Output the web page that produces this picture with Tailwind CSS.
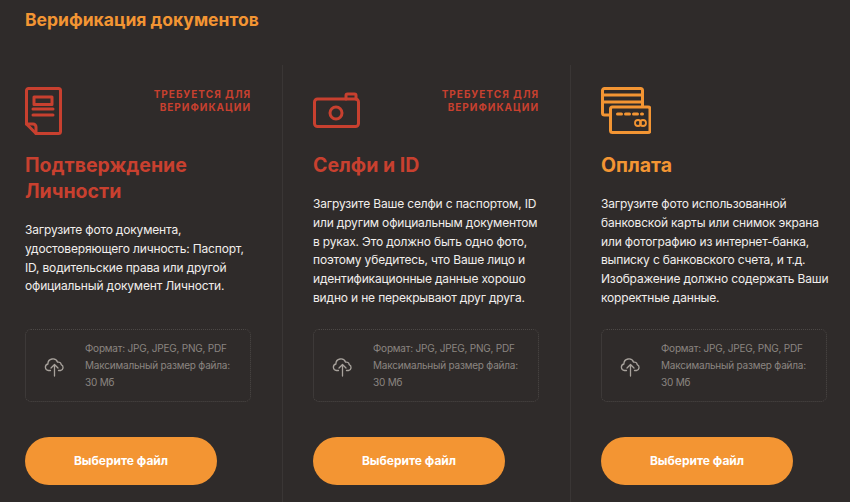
<!DOCTYPE html>
<html lang="ru">
<head>
    <meta charset="UTF-8">
    <meta name="viewport" content="width=device-width, initial-scale=1.0">
    <title>Верификация документов</title>
    <script src="https://cdn.jsdelivr.net/npm/@tailwindcss/browser@4"></script>
</head>
<body class="bg-[#2f2b2a] font-['Inter',sans-serif] h-[502px] w-[850px] overflow-hidden">
    <header class="pl-[25px] pt-[9px] h-[65px]">
        <h1 class="text-[17.5px] leading-[22px] font-bold text-[#f39533]">Верификация документов</h1>
    </header>

    <div class="grid grid-cols-[283px_288px_279px] h-[437px]">
        <!-- Personal ID -->
        <section class="flex flex-col pl-[25px] pr-[31px] border-r border-[#3a3635]">
            <div class="flex justify-between pt-[22px] h-[87px]">
                <svg class="w-[37px] h-[48px]" viewBox="0 0 37 48" fill="none" stroke="#c8402f" stroke-width="3" stroke-linejoin="round" stroke-linecap="round">
                    <path d="M1.500 37V3.500a2 2 0 0 1 2-2h30a2 2 0 0 1 2 2v41a2 2 0 0 1-2 2H11z"/>
                    <path d="M1.500 37h6.500a3 3 0 0 1 3 3v6.500"/>
                    <rect x="9" y="10" width="18" height="7.500"/>
                    <path d="M8 22h20M8 28h20"/>
                </svg>
                <p class="pt-[1px] text-right text-[10px] leading-[13px] font-bold tracking-[1px] text-[#c8402f]">ТРЕБУЕТСЯ ДЛЯ<br>ВЕРИФИКАЦИИ</p>
            </div>
            <h2 class="text-[19.500px] leading-[26px] font-bold text-[#c8402f]">Подтверждение<br>Личности</h2>
            <p class="mt-[17px] whitespace-nowrap text-[12px] leading-[18.800px] tracking-[-0.17px] text-[#f1eeec]">Загрузите фото документа,<br>удостоверяющего личность: Паспорт,<br>ID, водительские права или другой<br>официальный документ Личности.</p>
            <div class="mt-auto flex items-center h-[73px] border border-dotted border-[#4d4947] rounded-md">
                <svg class="w-[59px] h-[22px] shrink-0" viewBox="0 0 59 22" fill="none" stroke="#a8a29c" stroke-width="1.300" stroke-linecap="round" stroke-linejoin="round">
                    <path d="M24.500 15.500h-2a3.300 3.300 0 0 1-.6-6.500 5 5 0 0 1 9.700-1.800 2.800 2.800 0 0 1 3.600 2.400 3.100 3.100 0 0 1-.7 5.900h-2"/>
                    <path d="M28.500 21V9.500M25 13l3.500-3.500L32 13"/>
                </svg>
                <p class="text-[10px] leading-[17px] tracking-[-0.2px] text-[#8b8581]">Формат: JPG, JPEG, PNG, PDF<br>Максимальный размер файла:<br>30 Мб</p>
            </div>
            <button class="mt-[35px] mb-[17px] w-[192px] h-[48px] rounded-full bg-[#f39533] text-white text-[12px] font-bold">Выберите файл</button>
        </section>

        <!-- Selfie -->
        <section class="flex flex-col pl-[30px] pr-[31px] border-r border-[#3a3635]">
            <div class="flex justify-between pt-[22px] h-[87px]">
                <svg class="w-[48px] h-[48px]" viewBox="0 0 48 48" fill="none" stroke="#c8402f" stroke-width="3" stroke-linejoin="round" stroke-linecap="round">
                    <rect x="1.500" y="12" width="44" height="27.500" rx="3"/>
                    <path d="M33 12v-3.500a1.500 1.500 0 0 1 1.500-1.500h7a1.500 1.500 0 0 1 1.500 1.500v3.500"/>
                    <circle cx="23" cy="26" r="6"/>
                </svg>
                <p class="pt-[1px] text-right text-[10px] leading-[13px] font-bold tracking-[1px] text-[#c8402f]">ТРЕБУЕТСЯ ДЛЯ<br>ВЕРИФИКАЦИИ</p>
            </div>
            <h2 class="text-[19.500px] leading-[26px] font-bold text-[#c8402f]">Селфи и ID</h2>
            <p class="mt-[17px] whitespace-nowrap text-[12px] leading-[18.800px] tracking-[-0.17px] text-[#f1eeec]">Загрузите Ваше селфи с паспортом, ID<br>или другим официальным документом<br>в руках. Это должно быть одно фото,<br>поэтому убедитесь, что Ваше лицо и<br>идентификационные данные хорошо<br>видно и не перекрывают друг друга.</p>
            <div class="mt-auto flex items-center h-[73px] border border-dotted border-[#4d4947] rounded-md">
                <svg class="w-[59px] h-[22px] shrink-0" viewBox="0 0 59 22" fill="none" stroke="#a8a29c" stroke-width="1.300" stroke-linecap="round" stroke-linejoin="round">
                    <path d="M24.500 15.500h-2a3.300 3.300 0 0 1-.6-6.500 5 5 0 0 1 9.700-1.800 2.800 2.800 0 0 1 3.600 2.400 3.100 3.100 0 0 1-.7 5.900h-2"/>
                    <path d="M28.500 21V9.500M25 13l3.500-3.500L32 13"/>
                </svg>
                <p class="text-[10px] leading-[17px] tracking-[-0.2px] text-[#8b8581]">Формат: JPG, JPEG, PNG, PDF<br>Максимальный размер файла:<br>30 Мб</p>
            </div>
            <button class="mt-[35px] mb-[17px] w-[192px] h-[48px] rounded-full bg-[#f39533] text-white text-[12px] font-bold">Выберите файл</button>
        </section>

        <!-- Payment -->
        <section class="flex flex-col pl-[30px] pr-[23px]">
            <div class="flex justify-between pt-[22px] h-[87px]">
                <svg class="w-[50px] h-[48px]" viewBox="0 0 50 48" fill="none" stroke="#f39533" stroke-width="3" stroke-linejoin="round" stroke-linecap="round">
                    <path d="M8.500 28H3.500a2 2 0 0 1-2-2V3.500a2 2 0 0 1 2-2h36a2 2 0 0 1 2 2V19"/>
                    <path d="M1.500 8h40M1.500 15h40"/>
                    <rect x="9.500" y="20" width="39.500" height="25.500" rx="2"/>
                    <path d="M16.500 27h4M24.500 27h4M32.500 27h4M40.500 27h1"/>
                    <circle cx="37" cy="36" r="3" stroke-width="1.800"/>
                    <circle cx="42" cy="36" r="3" stroke-width="1.800"/>
                </svg>
            </div>
            <h2 class="text-[19.500px] leading-[26px] font-bold text-[#f39533]">Оплата</h2>
            <p class="mt-[17px] whitespace-nowrap text-[12px] leading-[18.800px] tracking-[-0.17px] text-[#f1eeec]">Загрузите фото использованной<br>банковской карты или снимок экрана<br>или фотографию из интернет-банка,<br>выписку с банковского счета, и т.д.<br>Изображение должно содержать Ваши<br>корректные данные.</p>
            <div class="mt-auto flex items-center h-[73px] border border-dotted border-[#4d4947] rounded-md">
                <svg class="w-[59px] h-[22px] shrink-0" viewBox="0 0 59 22" fill="none" stroke="#a8a29c" stroke-width="1.300" stroke-linecap="round" stroke-linejoin="round">
                    <path d="M24.500 15.500h-2a3.300 3.300 0 0 1-.6-6.500 5 5 0 0 1 9.700-1.800 2.800 2.800 0 0 1 3.600 2.400 3.100 3.100 0 0 1-.7 5.900h-2"/>
                    <path d="M28.500 21V9.500M25 13l3.500-3.500L32 13"/>
                </svg>
                <p class="text-[10px] leading-[17px] tracking-[-0.2px] text-[#8b8581]">Формат: JPG, JPEG, PNG, PDF<br>Максимальный размер файла:<br>30 Мб</p>
            </div>
            <button class="mt-[35px] mb-[17px] w-[192px] h-[48px] rounded-full bg-[#f39533] text-white text-[12px] font-bold">Выберите файл</button>
        </section>
    </div>
</body>
</html>
